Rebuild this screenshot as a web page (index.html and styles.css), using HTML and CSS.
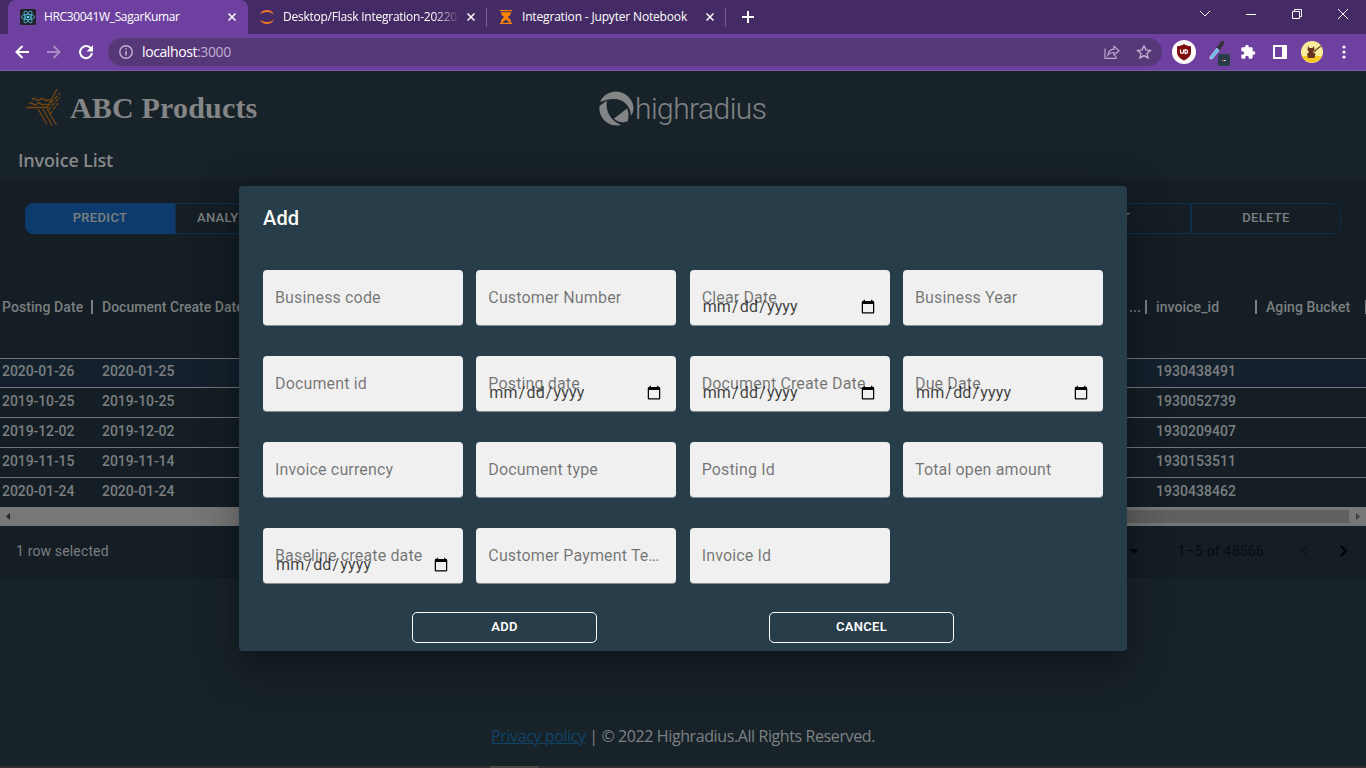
FILE: index.html
```html
<!DOCTYPE html>
<html lang="en">
<head>
<meta charset="utf-8">
<title>HRC30041W_SagarKumar</title>
<link rel="stylesheet" href="styles.css">
</head>
<body>
<div class="browser">
  <div class="tabstrip">
    <div class="tab tab-active">
      <svg class="tab-icon" width="16" height="16" viewBox="0 0 16 16"><rect width="16" height="16" rx="1.5" fill="#20232a"/><g fill="none" stroke="#53c1de" stroke-width=".8"><ellipse cx="8" cy="8" rx="6.6" ry="2.6"/><ellipse cx="8" cy="8" rx="6.6" ry="2.6" transform="rotate(60 8 8)"/><ellipse cx="8" cy="8" rx="6.6" ry="2.6" transform="rotate(120 8 8)"/></g><circle cx="8" cy="8" r="1.3" fill="#61dafb"/></svg>
      <span class="tab-title t1">HRC30041W_SagarKumar</span>
      <svg class="tab-close" width="8" height="8" viewBox="0 0 8 8"><path d="M.5.5l7 7M7.500.5l-7 7"/></svg>
    </div>
    <div class="tab tab-two">
      <svg class="tab-icon" width="16" height="16" viewBox="0 0 16 16"><path d="M1 5.600C2.300 2.400 5 1 8 1s5.700 1.400 7 4.600C13 3.900 10.700 3 8 3S3 3.900 1 5.600zM1 10.400C3 12.100 5.300 13 8 13s5-.9 7-2.600C13.700 13.600 11 15 8 15s-5.700-1.400-7-4.600z" fill="#f37726"/></svg>
      <span class="tab-title t2">Desktop/Flask Integration-20220</span>
      <svg class="tab-close" width="8" height="8" viewBox="0 0 8 8"><path d="M.5.5l7 7M7.500.5l-7 7"/></svg>
    </div>
    <div class="tab tab-three">
      <svg class="tab-icon" width="12" height="16" viewBox="0 0 12 16"><path d="M0 1h12v1.300H0zM0 13.700h12V15H0zM1 3.200h10c0 2.500-1.500 3.700-3.500 4.800C9.500 9.100 11 10.500 11 13.700h-1L6 10.500 2 13.700H1c0-3.200 1.500-4.600 3.500-5.700C2.500 6.900 1 5.700 1 3.200z" fill="#ff8400"/></svg>
      <span class="tab-title t3">Integration - Jupyter Notebook</span>
      <svg class="tab-close" width="8" height="8" viewBox="0 0 8 8"><path d="M.5.5l7 7M7.500.5l-7 7"/></svg>
    </div>
    <svg class="new-tab" width="12" height="12" viewBox="0 0 12 12"><path d="M6 0v12M0 6h12" stroke="#fff" stroke-width="2"/></svg>
    <div class="window-controls">
      <svg width="10" height="10" viewBox="0 0 10 10"><path d="M0 2l5 5 5-5"/></svg>
      <svg width="10" height="10" viewBox="0 0 10 10"><path d="M0 5.500h10"/></svg>
      <svg width="10" height="10" viewBox="0 0 10 10"><path d="M.5 2.500h7v7h-7zM2.500 2.500v-2h7v7h-2"/></svg>
      <svg width="10" height="10" viewBox="0 0 10 10"><path d="M0 0l10 10M10 0L0 10"/></svg>
    </div>
  </div>
  <div class="toolbar">
    <svg width="14" height="14" viewBox="0 0 14 14" fill="none" stroke="#fff" stroke-width="2"><path d="M14 7H1.500M7.500 1l-6 6 6 6"/></svg>
    <svg width="14" height="14" viewBox="0 0 14 14" fill="none" stroke="#a78bc6" stroke-width="2"><path d="M0 7h12.500M6.500 1l6 6-6 6"/></svg>
    <svg class="reload" width="16" height="16" viewBox="0 0 16 16"><path d="M13 4.700A6 6 0 1 0 14 9" fill="none" stroke="#fff" stroke-width="2"/><path d="M15 1v6.500H8.500z" fill="#fff"/></svg>
    <div class="omnibox">
      <svg width="14" height="14" viewBox="0 0 14 14"><circle cx="7" cy="7" r="6.200" fill="none" stroke="#c3b2d4" stroke-width="1.400"/><path d="M7 6v4.500M7 3.300v1.500" stroke="#c3b2d4" stroke-width="1.500"/></svg>
      <span class="url">localhost<span class="port">:3000</span></span>
      <svg class="share" width="16" height="14" viewBox="0 0 16 14" fill="none" stroke="#b9a8ca" stroke-width="1.200"><path d="M1 3.500v9.900h11V10.500"/><path d="M4 10C4.500 6 7 4.300 10 4.200V1.300l5 4.500-5 4.300V7.500C7.500 7.500 5.500 8 4 10z"/></svg>
      <svg width="16" height="16" viewBox="0 0 16 16"><path d="M8 1.800l1.900 4.100 4.500.5-3.400 3 1 4.500L8 11.600l-4 2.300 1-4.500-3.400-3 4.500-.5z" fill="none" stroke="#c6b8d4" stroke-width="1.300"/></svg>
    </div>
    <div class="extensions">
      <svg width="24" height="24" viewBox="0 0 24 24"><circle cx="12" cy="12" r="12" fill="#fff"/><path d="M12 4c2 1.500 4 2 7 2.200V12c0 4-3 6.500-7 8.500C8 18.500 5 16 5 12V6.200C8 6 10 5.500 12 4z" fill="#800d0d"/><path d="M8.500 9.500v2.600c0 1.800 3 1.800 3 0V9.500M13 9.500v4c3.400.5 3.400-4 0-4z" fill="none" stroke="#fff" stroke-width="1.200"/></svg>
      <svg class="picker" width="22" height="28" viewBox="0 0 22 28"><path d="M2 19L9 10l2.500 2L4.500 20.500 2 21z" fill="#69bce9" stroke="#d4e7f0" stroke-width=".7"/><path d="M8 9l2-1 2.500-4c2-2.500 5-.5 3.500 2l-3 4-.5 3z" fill="#34313b"/><rect x="10" y="16" width="12" height="12" rx="2" fill="#283f4a"/><path d="M14 22.500h2" stroke="#ef5350" stroke-width="1.200"/><path d="M16 22.500h1.500" stroke="#fff" stroke-width="1.200"/></svg>
      <svg class="puzzle" width="16" height="16" viewBox="0 0 24 24"><path d="M20.500 11H19V7c0-1.100-.9-2-2-2h-4V3.500a2.500 2.500 0 0 0-5 0V5H4c-1.100 0-2 .9-2 2v3.800h1.500a2.700 2.700 0 0 1 0 5.400H2V20c0 1.100.9 2 2 2h3.800v-1.500a2.700 2.700 0 0 1 5.400 0V22H17c1.100 0 2-.9 2-2v-4h1.500a2.500 2.500 0 0 0 0-5z" fill="#fff"/></svg>
      <svg class="side-panel" width="14" height="14" viewBox="0 0 14 14"><path d="M1 1h12v12H1z" fill="none" stroke="#fff" stroke-width="2"/><path d="M9 0h5v14H9z" fill="#fff"/></svg>
      <svg class="avatar" width="22" height="22" viewBox="0 0 22 22"><circle cx="11" cy="11" r="11" fill="#faed9b"/><path d="M1 15h20a11 11 0 0 1-20 0z" fill="#fbc926"/><path d="M7 5l1.500 2h3L13 5l.5 4-1.500 2 2.500 2-1 4H7l-1-4 2-2-1.500-2z" fill="#64341f"/><path d="M13 11l3-3 4-3" fill="none" stroke="#6a482a" stroke-width="1.300"/></svg>
      <svg class="kebab" width="4" height="14" viewBox="0 0 4 14" fill="#fff"><circle cx="2" cy="2" r="1.600"/><circle cx="2" cy="7" r="1.600"/><circle cx="2" cy="12" r="1.600"/></svg>
    </div>
  </div>
</div>

<div class="page">
  <header class="masthead">
    <div class="company">
      <svg width="36" height="38" viewBox="0 0 36 38" fill="none" stroke="#754512" stroke-width="1.300"><path d="M1 19.500h21L32 1M4 16q2-2 4 0t4 0 4 0 4 0l3 1M7 11.500q2-2 4 0t4 0 4 0 4 0l2 1M13 21l9 15.500M18 21l9 16.500M22 21l9.500 16"/><path d="M22 19L35 5M23 22l12-13M25 26l8-11" stroke-dasharray="4 1.500"/></svg>
      <span class="company-name">ABC Products</span>
    </div>
    <svg class="hr-logo" width="170" height="40" viewBox="0 0 170 40"><path d="M1 12A17.500 17.500 0 0 1 34.500 18.500Q34.500 22 32 26C31.500 13 20 4 1 12z" fill="#828486"/><path d="M.5 16L8 10.500C6 20 11 30 22 35C10 38-1 28 .5 16z" fill="#828486"/><path d="M15 28.500L28 18.500C30 23 30 27 28.500 31.500C23 33 18 32 15 28.500z" fill="#828486"/><text x="36" y="28.500" class="hr-word" textLength="132" lengthAdjust="spacing">highradius</text></svg>
  </header>
  <h2 class="list-title">Invoice List</h2>

  <main class="grid-panel">
    <div class="actions">
      <div class="btn-group left"><span class="act primary">PREDICT</span><span class="act cut">ANALY</span></div>
      <div class="btn-group right"><span class="act">EDIT</span><span class="act last">DELETE</span></div>
    </div>
    <div class="table">
      <div class="row head">
        <span class="c first">Posting Date</span><span class="c sep doc">Document Create Date</span>
        <span class="c more">Customer Payment ...</span><span class="c sep inv">invoice_id</span><span class="c sep aging">Aging Bucket</span><span class="end-sep"></span>
      </div>
      <div class="row selected"><span class="c first">2020-01-26</span><span class="c doc">2020-01-25</span><span class="c more"></span><span class="c inv">1930438491</span><span class="c aging"></span></div>
      <div class="row"><span class="c first">2019-10-25</span><span class="c doc">2019-10-25</span><span class="c more"></span><span class="c inv">1930052739</span><span class="c aging"></span></div>
      <div class="row"><span class="c first">2019-12-02</span><span class="c doc">2019-12-02</span><span class="c more"></span><span class="c inv">1930209407</span><span class="c aging"></span></div>
      <div class="row"><span class="c first">2019-11-15</span><span class="c doc">2019-11-14</span><span class="c more"></span><span class="c inv">1930153511</span><span class="c aging"></span></div>
      <div class="row"><span class="c first">2020-01-24</span><span class="c doc">2020-01-24</span><span class="c more"></span><span class="c inv">1930438462</span><span class="c aging"></span></div>
    </div>
    <div class="scrollbar">
      <svg width="17" height="17" viewBox="0 0 17 17"><path d="M10 5v7L6 8.500z" fill="#252525"/></svg>
      <div class="thumb"></div>
      <svg width="17" height="17" viewBox="0 0 17 17"><path d="M7 5v7l4-3.500z" fill="#404040"/></svg>
    </div>
    <div class="pager">
      <span class="selected-count">1 row selected</span>
      <svg class="caret" width="10" height="5" viewBox="0 0 10 5"><path d="M0 0h10L5 5z" fill="#070b0d"/></svg>
      <span class="range">1–5 of 48566</span>
      <svg class="prev" width="8" height="12" viewBox="0 0 8 12"><path d="M7 1L2 6l5 5" fill="none" stroke="#10171b" stroke-width="1.800"/></svg>
      <svg width="8" height="12" viewBox="0 0 8 12"><path d="M1 1l5 5-5 5" fill="none" stroke="#020304" stroke-width="2.200"/></svg>
    </div>
  </main>
  <footer class="footer"><span class="foot-text"><a class="policy">Privacy policy</a> | © 2022 Highradius.All Rights Reserved.</span></footer>
  <div class="taskbar"><div class="taskbar-active"></div></div>
</div>

<div class="dialog">
  <h1 class="dialog-title">Add</h1>
  <div class="fields">
    <div class="field"><label>Business code</label></div>
    <div class="field"><label>Customer Number</label></div>
    <div class="field"><label>Clear Date</label><input type="date"></div>
    <div class="field"><label>Business Year</label></div>
    <div class="field"><label>Document id</label></div>
    <div class="field"><label>Posting date</label><input type="date"></div>
    <div class="field"><label>Document Create Date</label><input type="date"></div>
    <div class="field"><label>Due Date</label><input type="date"></div>
    <div class="field"><label>Invoice currency</label></div>
    <div class="field"><label>Document type</label></div>
    <div class="field"><label>Posting Id</label></div>
    <div class="field"><label>Total open amount</label></div>
    <div class="field"><label>Baseline create date</label><input type="date"></div>
    <div class="field"><label>Customer Payment Terms</label></div>
    <div class="field"><label>Invoice Id</label></div>
  </div>
  <div class="dialog-actions"><span class="dbtn">ADD</span><span class="dbtn">CANCEL</span></div>
</div>
</body>
</html>
```
FILE: styles.css
```css
* { box-sizing: border-box; }
body { margin: 0; width: 1366px; height: 768px; overflow: hidden; background: #182329; font-family: Roboto, sans-serif; }
svg { display: block; flex: none; }

.browser { height: 71px; background: #6e41a0; font-family: "Open Sans", sans-serif; color: #fff; }
.tabstrip { height: 34px; background: #452b65; display: flex; align-items: center; padding-left: 8px; }
.tab { height: 34px; display: flex; align-items: center; }
.tab-active { width: 240px; background: #6e41a0; border-radius: 8px 8px 0 0; padding: 0 12px; }
.tab-two { width: 239px; padding: 0 12px 0 11px; }
.tab-three { width: 239px; padding: 0 12px 0 13px; position: relative; }
.tab-three::before, .tab-three::after { content: ""; position: absolute; top: 8px; height: 19px; width: 1px; background: #74618c; left: -1px; }
.tab-three::after { left: auto; right: 0; }
.tab-title { font-size: 12px; line-height: 16px; white-space: nowrap; overflow: hidden; margin-left: 8px; flex: 1; }
.t1 { letter-spacing: -0.38px; }
.t2 { letter-spacing: -0.25px; flex: 0 0 177px; -webkit-mask-image: linear-gradient(90deg, #000 85%, transparent); mask-image: linear-gradient(90deg, #000 85%, transparent); }
.t3 { letter-spacing: -0.17px; margin-left: 10px; }
.tab-close { fill: none; stroke: #fff; stroke-width: 1.5; margin-left: auto; }
.new-tab { margin-left: 16px; }
.window-controls { margin-left: auto; display: flex; gap: 36px; padding: 0 18px 6px 0; }
.window-controls svg { fill: none; stroke: #fff; stroke-width: 1; }
.toolbar { height: 37px; display: flex; align-items: center; padding: 0 20px 1px 15px; gap: 18px; border-bottom: 1px solid #8058ad; }
.reload { margin-left: -1px; }
.omnibox { width: 1054px; height: 28px; border-radius: 14px; background: #563778; display: flex; align-items: center; padding: 0 10px 0 11px; margin-left: -4px; }
.url { font-size: 14px; letter-spacing: -0.4px; margin-left: 9px; line-height: 20px; }
.port { color: #bfaecf; }
.share { margin: 0 16px 0 auto; }
.extensions { display: flex; align-items: center; flex: none; margin-left: -8px; }
.picker { margin-left: 12px; }
.puzzle { margin-left: 10px; }
.side-panel { margin-left: 17px; }
.avatar { margin-left: 14px; }
.kebab { margin-left: 19px; }

.masthead { height: 73px; display: flex; padding: 16px 0 0 25px; }
.company { display: flex; align-items: center; gap: 9px; height: 40px; }
.company-name { font: bold 30px/36px "Liberation Serif", serif; color: #838586; white-space: nowrap; letter-spacing: .18px; padding-top: 1px; }
.hr-logo { margin: 3px 0 0 342px; }
.hr-word { font: 300 30px Roboto, sans-serif; fill: #828486; }
.list-title { margin: 0; height: 35px; padding-left: 18px; font: 600 18px/33px "Open Sans", sans-serif; letter-spacing: -.18px; color: #858889; }

.grid-panel { height: 399px; background: #141e24; }
.actions { display: flex; justify-content: space-between; padding: 24px 25px 0; height: 78px; }
.btn-group { display: flex; height: 31px; }
.act { width: 150px; height: 31px; border: 1px solid #102d4b; display: flex; align-items: center; justify-content: center; font-size: 13px; font-weight: 500; letter-spacing: .33px; color: #7c8082; padding-bottom: 2px; white-space: nowrap; }
.act.primary { background: #0d3b6b; border-color: #0d3b6b; border-radius: 8px 0 0 8px; }
.act.cut { justify-content: flex-start; padding-left: 21px; }
.act.last { border-radius: 0 8px 8px 0; }
.row { height: 30px; display: flex; align-items: center; border-bottom: 1px solid #727678; font-size: 14px; font-weight: 500; letter-spacing: -.08px; color: #7b7f81; padding-bottom: 4px; }
.row.head { height: 102px; padding-bottom: 2px; letter-spacing: .08px; }
.row.selected { background: #14212c; height: 29px; }
.row:last-child { border-bottom: 0; }
.c { white-space: nowrap; overflow: hidden; }
.first { width: 92px; padding-left: 2px; flex: none; }
.doc { width: 160px; padding-left: 10px; flex: none; }
.more { flex: 1; text-align: right; padding-right: 5px; }
.inv, .aging { width: 110px; padding-left: 10px; flex: none; }
.inv { letter-spacing: .05px; }
.head .inv { letter-spacing: .1px; }
.sep { background: linear-gradient(#7b7f81, #7b7f81) 0 50% / 2px 14px no-repeat; margin-left: -1px; padding-left: 11px; }
.doc.sep { width: 161px; letter-spacing: .02px; }
.inv.sep, .aging.sep { width: 111px; }
.end-sep { width: 2px; height: 14px; background: #7b7f81; margin-left: -1px; margin-right: -1px; flex: none; }
.scrollbar { height: 19px; background: #777; display: flex; align-items: center; justify-content: space-between; margin-top: -1px; }
.thumb { flex: 1; height: 13px; background: linear-gradient(90deg, #777 40%, #606060 40%); }
.pager { display: flex; align-items: center; height: 50px; padding: 0 18px 0 16px; font-size: 14px; }
.selected-count { color: #7b7f81; letter-spacing: .15px; }
.caret { margin-left: auto; }
.range { color: #080c0e; margin: 0 36px 0 39px; letter-spacing: .2px; }
.prev { margin-right: 32px; }
.footer { height: 188px; display: flex; justify-content: center; align-items: flex-end; padding-bottom: 19px; }
.foot-text { font: 16px/22px "Open Sans", sans-serif; letter-spacing: -.4px; color: #7e8284; white-space: nowrap; }
.policy { color: #104469; text-decoration: underline; }
.taskbar { height: 2px; background: #34302f; display: flex; padding-left: 490px; }
.taskbar-active { width: 48px; background: #4b4745; }

.dialog { position: absolute; left: 239px; top: 186px; width: 888px; height: 465px; background: #283d4a; border-radius: 4px; padding: 16px 24px 8px; box-shadow: 0 11px 15px -7px rgba(0,0,0,.2), 0 24px 38px 3px rgba(0,0,0,.14), 0 9px 46px 8px rgba(0,0,0,.12); }
.dialog-title { margin: 0; font: 500 20px/32px Roboto, sans-serif; letter-spacing: .15px; color: #fff; }
.fields { margin-top: 36px; display: grid; grid-template-columns: repeat(4, 200px); justify-content: space-between; row-gap: 30px; }
.field { height: 56px; position: relative; background: #f0f0f0; border-radius: 4px; border-bottom: 1px solid #858c90; padding: 25px 12px 7px; font-size: 16px; letter-spacing: .15px; }
.field label { position: absolute; left: 12px; top: 16px; max-width: 176px; line-height: 23px; color: rgba(0,0,0,.53); overflow: hidden; text-overflow: ellipsis; white-space: nowrap; }
.field input { display: block; width: 100%; height: 23px; padding: 0; border: 0; background: none; font: 16px Roboto, sans-serif; letter-spacing: .15px; color: rgba(0,0,0,.76); outline: 0; }
.dialog-actions { display: flex; justify-content: center; gap: 172px; margin-top: 28px; }
.dbtn { width: 185px; height: 31px; border: 1px solid #fff; border-radius: 5px; color: #fff; font-size: 13px; font-weight: 600; letter-spacing: .3px; display: flex; align-items: center; justify-content: center; padding-bottom: 2px; }
```
